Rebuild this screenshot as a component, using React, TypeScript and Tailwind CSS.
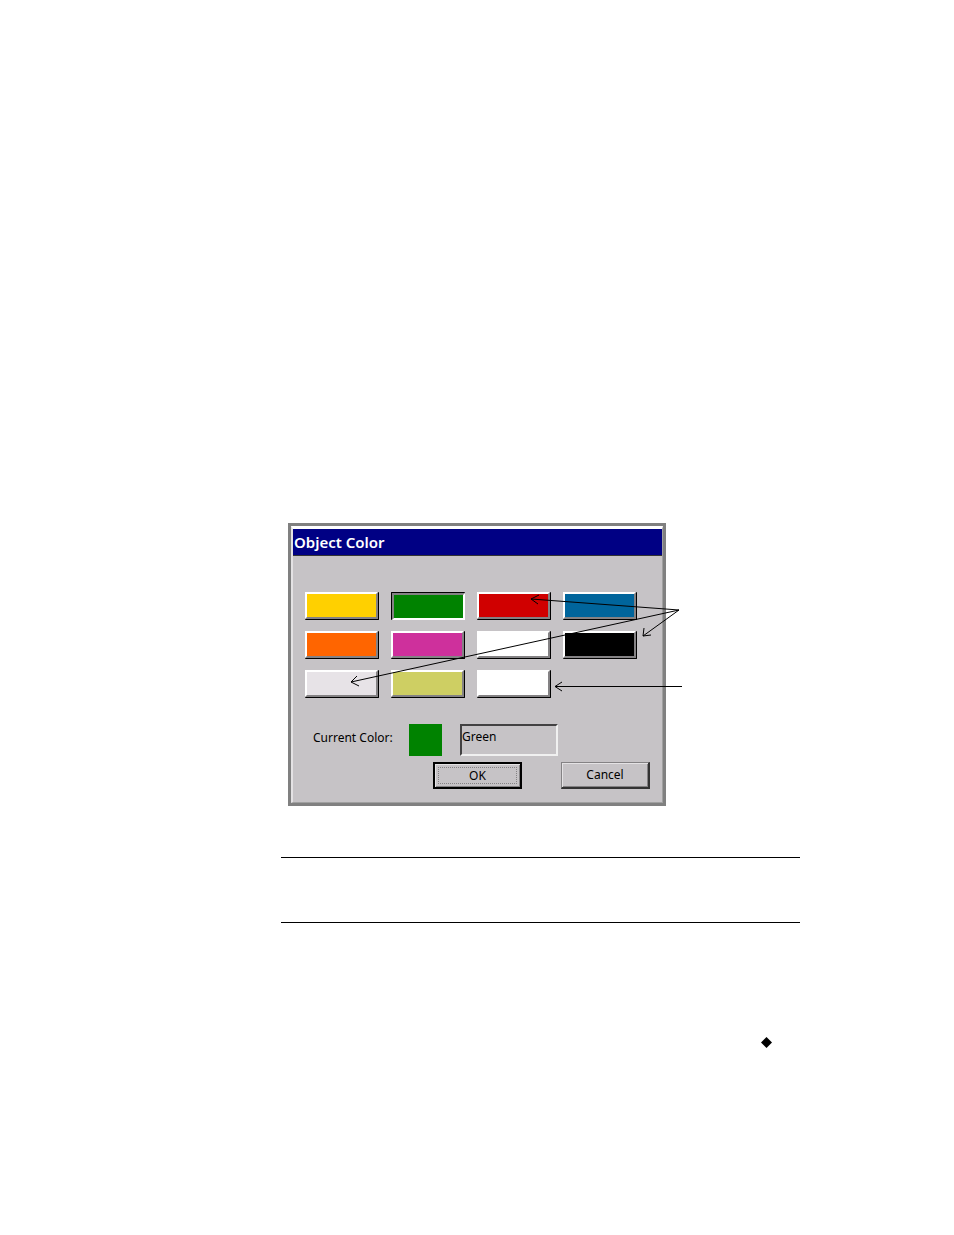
import { useState } from "react";
import { clsx } from "clsx";

type Swatch = {
  id: number;
  name: string;
  fill: string;
};

const swatches: Swatch[] = [
  { id: 1, name: "Yellow", fill: "bg-[#ffd000]" },
  { id: 2, name: "Green", fill: "bg-[#008200]" },
  { id: 3, name: "Red", fill: "bg-[#d00000]" },
  { id: 4, name: "Blue", fill: "bg-[#00659c]" },
  { id: 5, name: "Orange", fill: "bg-[#ff6500]" },
  { id: 6, name: "Magenta", fill: "bg-[#ce309c]" },
  { id: 7, name: "White", fill: "bg-white" },
  { id: 8, name: "Black", fill: "bg-black" },
  { id: 9, name: "Light Gray", fill: "bg-[#e7e3e7]" },
  { id: 10, name: "Khaki", fill: "bg-[#cecf63]" },
  { id: 11, name: "None", fill: "bg-white" },
];

function SwatchButton({
  swatch,
  selected,
  onSelect,
}: {
  swatch: Swatch;
  selected: boolean;
  onSelect: () => void;
}) {
  return (
    <button
      type="button"
      aria-label={swatch.name}
      aria-pressed={selected}
      onClick={onSelect}
      className={clsx(
        "h-7 w-[74px] rounded-[1px]",
        selected
          ? "border-t border-l border-t-black border-l-black"
          : "border-r border-b border-r-black border-b-black"
      )}
    >
      <span
        className={clsx(
          "block h-full w-full border-2",
          selected
            ? "border-t-[#848284] border-l-[#848284] border-r-white border-b-white"
            : "border-t-white border-l-white border-r-[#848284] border-b-[#848284]",
          swatch.fill
        )}
      />
    </button>
  );
}

function ColorDialog() {
  const [current, setCurrent] = useState<Swatch>(swatches[1]);

  return (
    <div
      role="dialog"
      aria-labelledby="dialog-title"
      className="w-full border-3 border-[#808080] bg-[#c6c3c6] text-[12px] leading-4"
    >
      <div className="border-t-3 border-l-2 border-r border-b border-t-white border-l-[#e4e2e4] border-r-[#a0a0a0] border-b-[#a0a0a0]">
        <h1
          id="dialog-title"
          className="h-[27px] border-b border-[#333] bg-[#000084] px-px text-[15px] leading-[26px] font-semibold text-white"
        >
          Object Color
        </h1>

        <div className="mt-9 ml-3 flex flex-wrap gap-x-3 gap-y-[11px]">
          {swatches.map((swatch) => (
            <SwatchButton
              key={swatch.id}
              swatch={swatch}
              selected={swatch.id === current.id}
              onSelect={() => setCurrent(swatch)}
            />
          ))}
        </div>

        <div className="mt-[26px] ml-5 flex items-center">
          <label htmlFor="current-color" className="w-24 pb-1">
            Current Color:
          </label>
          <div className={clsx("h-8 w-[33px]", current.fill)} />
          <input
            id="current-color"
            type="text"
            readOnly
            value={current.name}
            className="ml-[18px] h-8 w-[98px] border-2 border-t-[#424142] border-l-[#424142] border-r-[#f0f0f0] border-b-[#f0f0f0] pb-2 outline-none"
          />
        </div>

        <div className="mt-[6px] mr-3 mb-[13px] flex justify-end gap-[39px]">
          <button
            type="button"
            className="h-[27px] w-[89px] border-2 border-black p-[3px] shadow-[inset_1px_1px_#e4e2e4,inset_-1px_-1px_#848284]"
          >
            <span className="flex h-full items-center justify-center border border-dotted border-[#848284]">
              OK
            </span>
          </button>
          <button
            type="button"
            className="h-[27px] w-[89px] border-t border-l border-r-2 border-b-2 border-t-[#848284] border-l-[#848284] border-r-[#333] border-b-[#333] shadow-[inset_1px_1px_#e4e2e4,inset_-1px_-1px_#848284]"
          >
            Cancel
          </button>
        </div>
      </div>
    </div>
  );
}

// Callout arrows drawn over the dialog
function Callouts() {
  return (
    <svg
      aria-hidden="true"
      width="400"
      height="283"
      viewBox="0 0 400 283"
      fill="none"
      stroke="black"
      className="pointer-events-none absolute top-0 left-0"
    >
      <path d="M391 87 243 76M251 72l-8 4 7 5" />
      <path d="M391 87 63 159M69 153l-6 6 8 4" />
      <path d="M391 87 355 113M356 105l-1 8 8-1" />
      <path d="M394 163.5H267M274 159l-7 4.5 7 4.5" />
    </svg>
  );
}

export default function App() {
  return (
    <main className="bg-white pt-[523px] pr-4 pb-[187px] pl-[281px] font-['Noto_Sans','Open_Sans',sans-serif] text-black">
      <div className="max-w-[519px]">
        <figure className="relative ml-[7px] max-w-[378px]">
          <ColorDialog />
          <Callouts />
        </figure>

        <div className="mt-[51px] h-[66px] border-y border-black" />

        <div className="mt-[114px] mr-7 flex justify-end">
          <svg aria-hidden="true" width="11" height="11" viewBox="0 0 11 11">
            <path d="M5.5 0 11 5.5 5.5 11 0 5.5z" />
          </svg>
        </div>
      </div>
    </main>
  );
}
